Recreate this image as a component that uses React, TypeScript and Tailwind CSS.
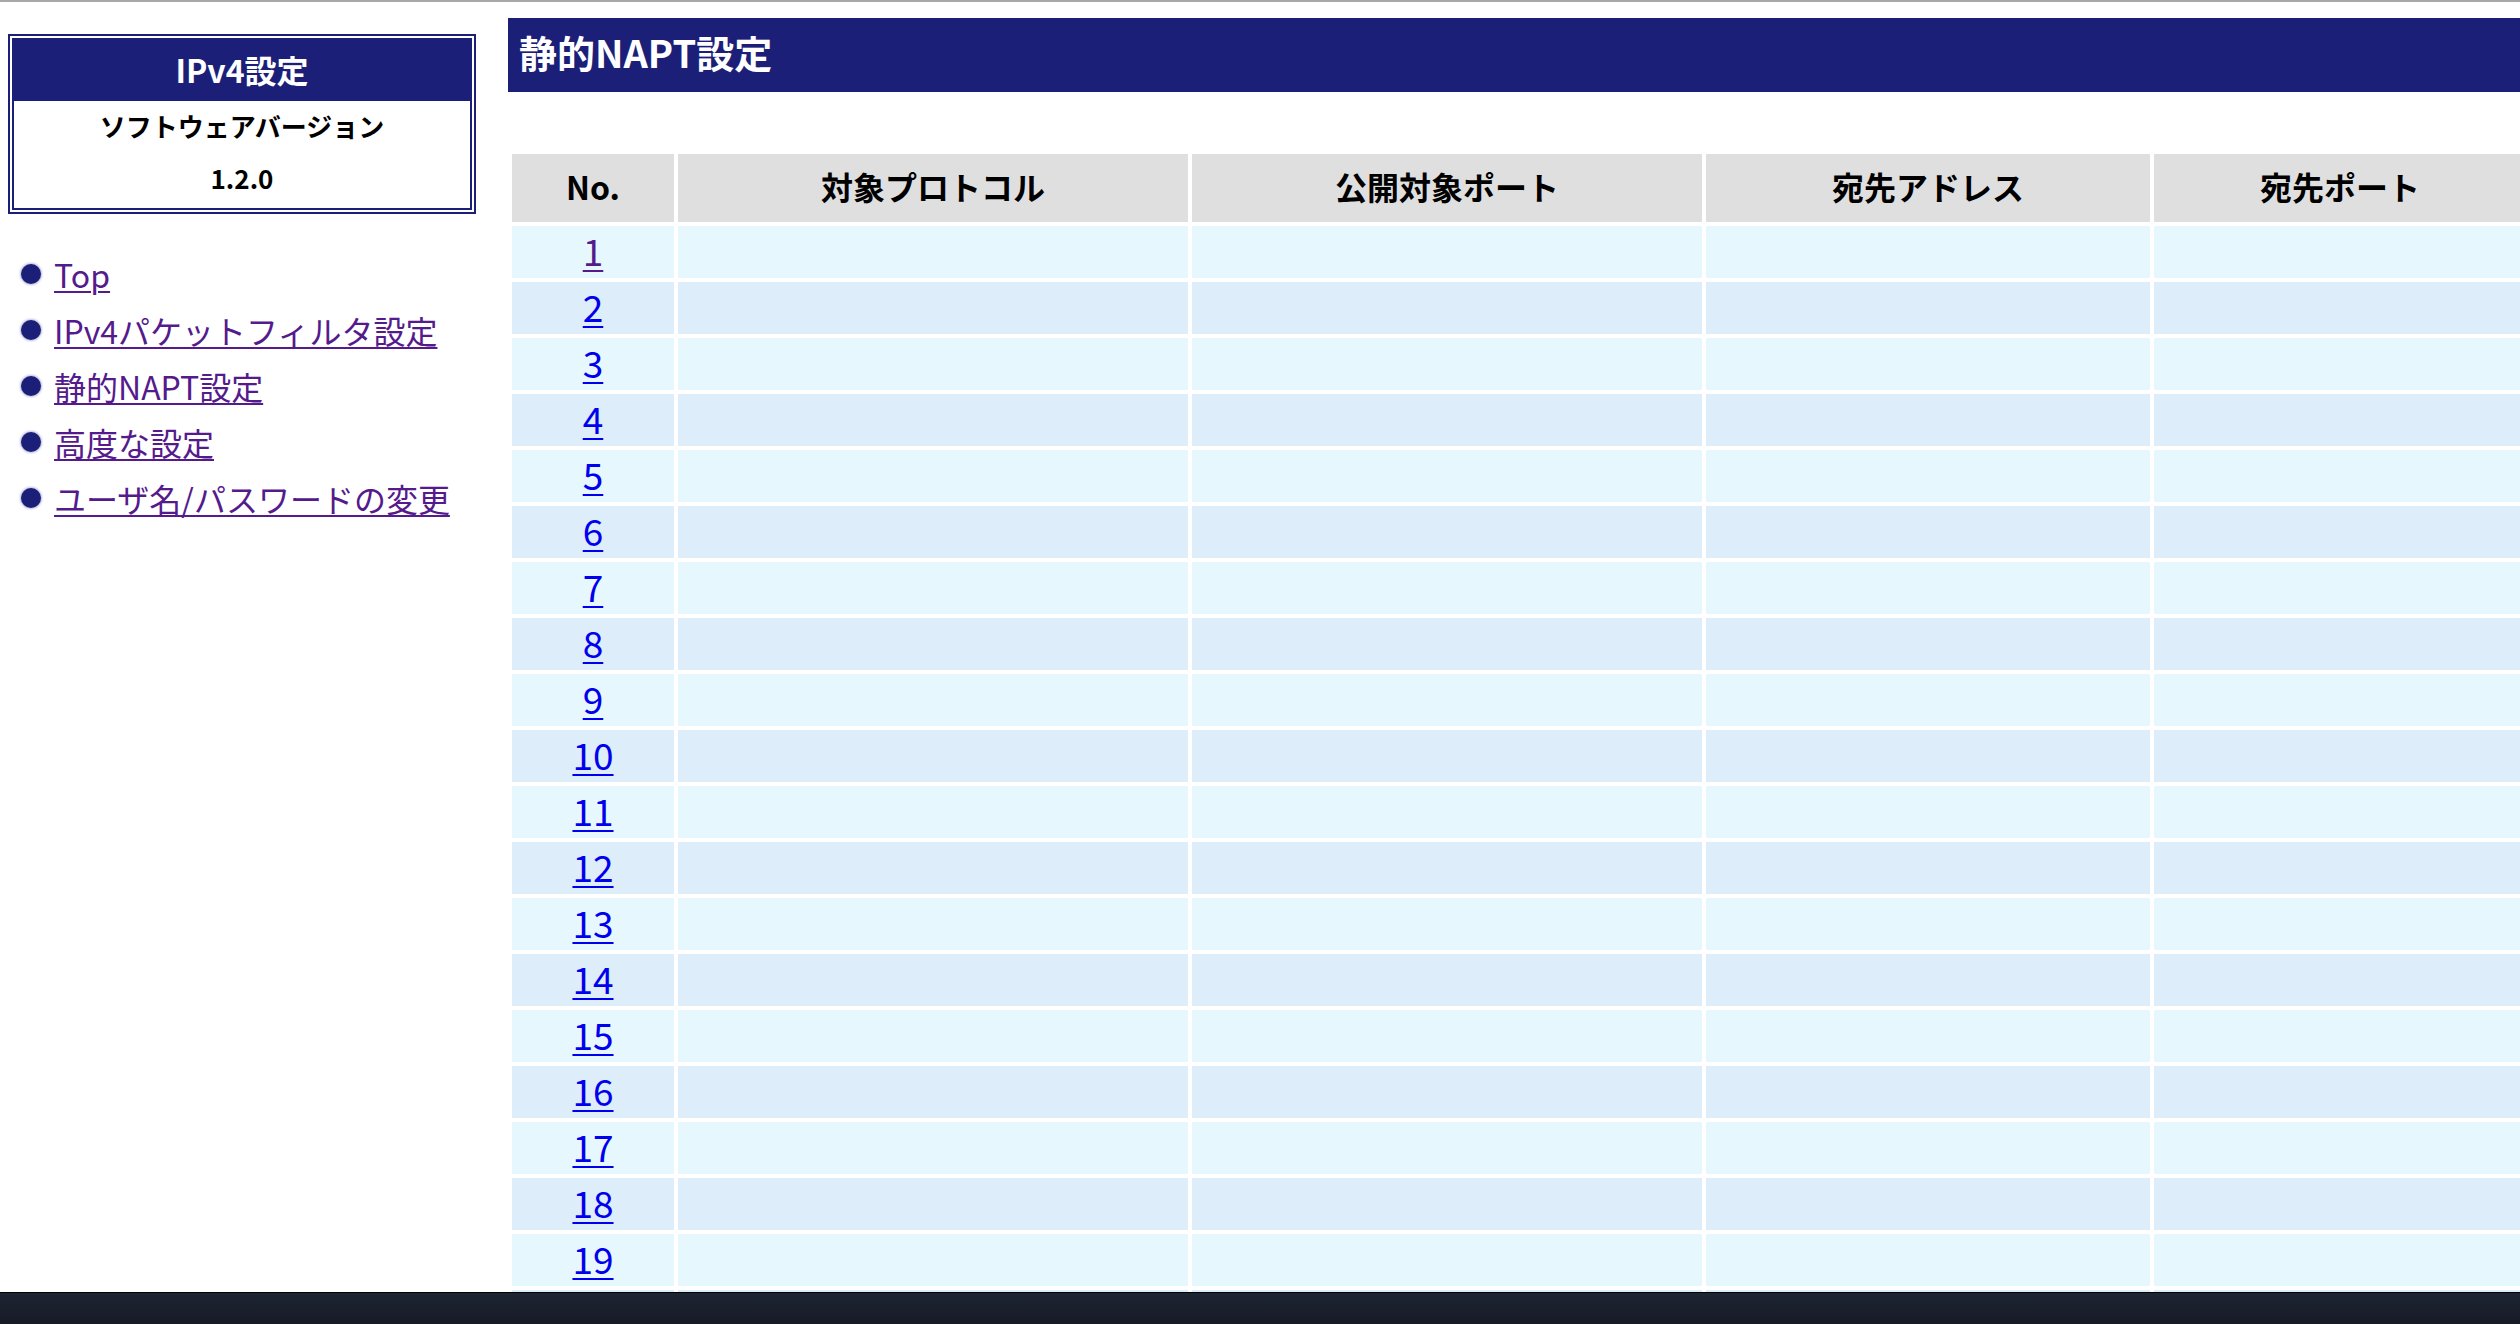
const NAVY = 'bg-[#1c1f78]'

const navItems = [
  'Top',
  'IPv4パケットフィルタ設定',
  '静的NAPT設定',
  '高度な設定',
  'ユーザ名/パスワードの変更',
]

const headers = ['No.', '対象プロトコル', '公開対象ポート', '宛先アドレス', '宛先ポート']

// 画面に収まるのは19行、20行目以降は下端で切れる
const rows = Array.from({ length: 22 }, (_, i) => i + 1)
const VISIBLE = 19

function Bullet() {
  return (
    <span className="inline-block w-[20px] h-[20px] rounded-full bg-[#1c1f78] shadow-[0_0_2px_1px_rgba(60,64,170,0.35)] shrink-0" />
  )
}

function SideBox() {
  return (
    <div className="w-[468px] border-[6px] border-double border-[#1c1f78]">
      <div className={`${NAVY} h-[61px] pb-[4px] flex items-center justify-center text-white font-bold text-[32px]`}>
        IPv4設定
      </div>
      <div className="text-black font-bold text-[26px] pb-[4px]">
        <div className="h-[49px] flex items-center justify-center">ソフトウェアバージョン</div>
        <div className="h-[54px] flex items-center justify-center">1.2.0</div>
      </div>
    </div>
  )
}

export default function App() {
  return (
    <div className="w-[2520px] h-[1324px] flex flex-col overflow-hidden bg-white font-['Noto_Sans_CJK_JP','Noto_Sans',sans-serif]">
      <div className="h-[2px] shrink-0 bg-[#a8a8a8]" />

      <div className="flex-1 min-h-0 flex overflow-hidden">
        {/* 左メニュー */}
        <aside className="w-[508px] shrink-0 pl-[8px] pt-[32px]">
          <SideBox />
          <ul className="mt-[32px]">
            {navItems.map((item) => (
              <li key={item} className="h-[56px] flex items-center gap-[13px] pl-[13px]">
                <Bullet />
                <a href="#" className="text-[32px] leading-none text-[#551a8b] underline underline-offset-[3px] decoration-[2px] whitespace-nowrap">
                  {item}
                </a>
              </li>
            ))}
          </ul>
        </aside>

        {/* 本体 */}
        <main className="flex-1 min-w-0 pt-[16px] overflow-hidden">
          <div className={`${NAVY} h-[74px] pb-[7px] flex items-center pl-[11px] text-white font-bold text-[38px] whitespace-nowrap`}>
            静的NAPT設定
          </div>

          <div className="mt-[62px] ml-[4px] grid grid-cols-[162px_510px_510px_444px_372px] gap-[4px] w-max">
            {headers.map((h) => (
              <div key={h} className="bg-[#dfdfdf] h-[68px] pb-[4px] flex items-center justify-center font-bold text-[32px] text-black whitespace-nowrap">
                {h}
              </div>
            ))}

            {rows.map((n) => {
              const bg = n % 2 === 1 ? 'bg-[#e6f8fd]' : 'bg-[#ddedf9]'
              return [
                <div key={`n${n}`} className={`${bg} h-[52px] pb-[4px] flex items-center justify-center`}>
                  {n <= VISIBLE && (
                    <a href="#" className={`text-[37px] leading-none underline underline-offset-[4px] decoration-[2px] ${n === 1 ? 'text-[#551a8b]' : 'text-[#0000ee]'}`}>
                      {n}
                    </a>
                  )}
                </div>,
                <div key={`a${n}`} className={`${bg} h-[52px]`} />,
                <div key={`b${n}`} className={`${bg} h-[52px]`} />,
                <div key={`c${n}`} className={`${bg} h-[52px]`} />,
                <div key={`d${n}`} className={`${bg} h-[52px]`} />,
              ]
            })}
          </div>
        </main>
      </div>

      <div className="h-[32px] shrink-0 border-t border-black bg-gradient-to-b from-[#1d2432] to-[#161b26]" />
    </div>
  )
}
